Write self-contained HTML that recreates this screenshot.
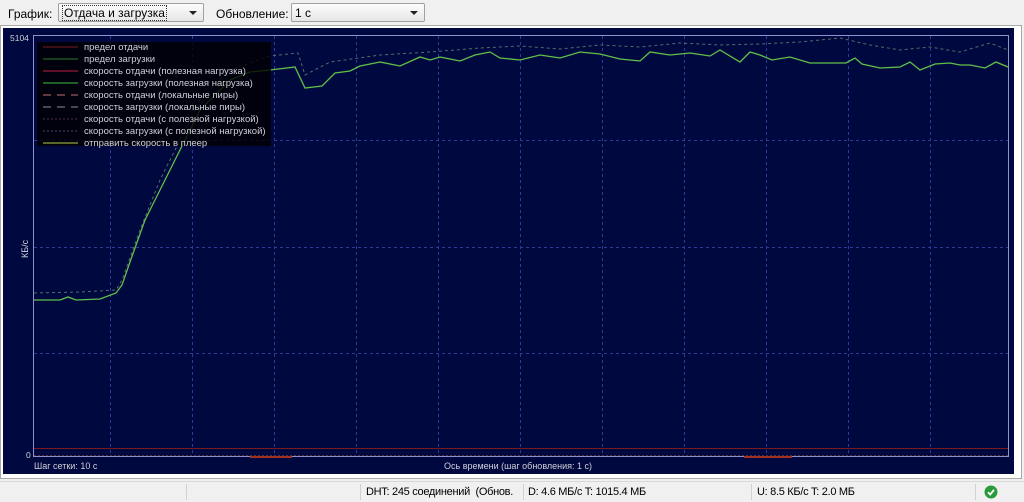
<!DOCTYPE html>
<html><head><meta charset="utf-8"><style>
body{margin:0;width:1024px;height:501px;background:#f0f0f0;font-family:"Liberation Sans",sans-serif;font-size:11px;position:relative;overflow:hidden}
.tb{position:absolute;top:0;left:0;width:1024px;height:27px;background:#f0f0f0}
.lbl{position:absolute;top:7px;color:#000;font-size:12px}
.cb{position:absolute;top:3px;height:19px;border:1px solid #a0a0a0;border-radius:2px;background:linear-gradient(#fdfdfd,#e6e6e6);font-size:12px;line-height:19px;box-sizing:border-box;padding-left:3px}
.cb:after{content:"";position:absolute;right:6px;top:7px;border:4px solid transparent;border-top:4px solid #222}
.sb{position:absolute;top:481px;left:0;width:1024px;height:20px;background:#f0f0f0;border-top:1px solid #d8d8d8;font-size:11px;line-height:20px;letter-spacing:-0.3px}
.sep{position:absolute;top:2px;height:16px;border-left:1px solid #d0d0d0}
</style></head><body>
<div class="tb">
<span class="lbl" style="left:8px">График:</span>
<div class="cb" style="left:58px;width:146px"><span style="border:1px dotted #333;padding:0 1px">Отдача и загрузка</span></div>
<span class="lbl" style="left:216px">Обновление:</span>
<div class="cb" style="left:291px;width:134px">1 с</div>
</div>
<div style="position:absolute;left:0;top:25px;width:1020px;height:452px;border:1px solid #a8a8a8;background:#fff"></div>
<svg style="position:absolute;left:3px;top:28px" width="1011" height="446" viewBox="3 28 1011 446">
<rect x="3" y="28" width="1011" height="446" fill="#000840"/>
<rect x="33.5" y="35.5" width="975" height="421" fill="none" stroke="#9090d0"/>
<g stroke="#2c3a98" stroke-dasharray="3,3" stroke-width="1">
<path d="M110.5 36V456M192.5 36V456M274.5 36V456M356.5 36V456M438.5 36V456M520.5 36V456M602.5 36V456M684.5 36V456M766.5 36V456M848.5 36V456M930.5 36V456"/>
<path d="M34 140.5H1008M34 247.5H1008M34 353.5H1008"/>
</g>
<path d="M34 448.5H1008" stroke="#7a1a1a"/>
<path d="M34 455.5H1008" stroke="#5a2a3a" stroke-dasharray="2,2"/>
<path d="M250 457H292M744 457H792" stroke="#a03020" stroke-width="2"/>
<path d="M34 293L80 292L116 290L122 280L140 230L160 180L180 140L200 100L230 70L270 56L298 53L305 75L330 62L380 55L430 52L480 48L520 46L560 49L600 45L640 47L680 43L720 45L760 44L800 42L840 38L870 45L900 50L930 47L960 52L990 43L1008 50" fill="none" stroke="#5a6a6a" stroke-dasharray="3,3"/>
<path d="M34 300L60 300L68 297L76 300L100 299L116 293L122 285L130 262L145 220L160 190L180 150L200 110L230 80L250 72L270 70L295 67L305 88L322 86L335 73L350 71L360 66L380 62L400 66L420 57L430 60L440 57L450 59L460 61L475 55L490 52L500 58L520 60L540 55L560 58L580 52L600 54L620 59L640 61L650 52L670 55L690 53L710 56L720 50L740 62L750 52L760 55L772 60L790 57L810 63L830 63L846 63L855 58L862 64L880 68L900 67L910 62L920 70L935 64L950 63L960 65L970 65L985 68L996 62L1008 67" fill="none" stroke="#60c048" stroke-width="1.3"/>
<rect x="37" y="42" width="234" height="104" fill="#000" opacity="0.8"/>
<g stroke-width="1">
<path d="M43 47H78" stroke="#7a1a1a"/>
<path d="M43 59H78" stroke="#2a7a2a"/>
<path d="M43 71H78" stroke="#c02040"/>
<path d="M43 83H78" stroke="#40c040"/>
<path d="M43 95H78" stroke="#c07070" stroke-dasharray="8,6"/>
<path d="M43 107H78" stroke="#909090" stroke-dasharray="8,6"/>
<path d="M43 119H78" stroke="#503050" stroke-dasharray="2,2"/>
<path d="M43 131H78" stroke="#404a70" stroke-dasharray="2,2"/>
<path d="M43 143H78" stroke="#b0d040"/>
</g>
<g fill="#d0d0d8" font-family="Liberation Sans,sans-serif" font-size="9.5">
<text x="84" y="50">предел отдачи</text>
<text x="84" y="62">предел загрузки</text>
<text x="84" y="74">скорость отдачи (полезная нагрузка)</text>
<text x="84" y="86">скорость загрузки (полезная нагрузка)</text>
<text x="84" y="98">скорость отдачи (локальные пиры)</text>
<text x="84" y="110">скорость загрузки (локальные пиры)</text>
<text x="84" y="122">скорость отдачи (с полезной нагрузкой)</text>
<text x="84" y="134">скорость загрузки (с полезной нагрузкой)</text>
<text x="84" y="146">отправить скорость в плеер</text>
<text x="10" y="41" font-size="8.5">5104</text>
<text x="26" y="458" font-size="8.5">0</text>
<text x="34" y="469" font-size="9">Шаг сетки: 10 с</text>
<text x="444" y="469" font-size="9">Ось времени (шаг обновления: 1 с)</text>
<text transform="translate(28,258) rotate(-90)" font-size="9">КБ/с</text>
</g>
</svg>
<div class="sb">
<div class="sep" style="left:186px"></div>
<div class="sep" style="left:360px"></div>
<span style="position:absolute;left:366px;width:156px;overflow:hidden;white-space:nowrap">DHT: 245 соединений &nbsp;(Обнов.</span>
<div class="sep" style="left:523px"></div>
<span style="position:absolute;left:528px">D: 4.6 МБ/с T: 1015.4 МБ</span>
<div class="sep" style="left:751px"></div>
<span style="position:absolute;left:757px">U: 8.5 КБ/с T: 2.0 МБ</span>
<div class="sep" style="left:975px"></div>
<svg style="position:absolute;left:984px;top:3px" width="14" height="14"><circle cx="7" cy="7" r="6.5" fill="#2a9a3a"/><path d="M4 7.2L6.2 9.5L10 4.8" stroke="#fff" stroke-width="1.8" fill="none"/></svg>
</div>
</body></html>
